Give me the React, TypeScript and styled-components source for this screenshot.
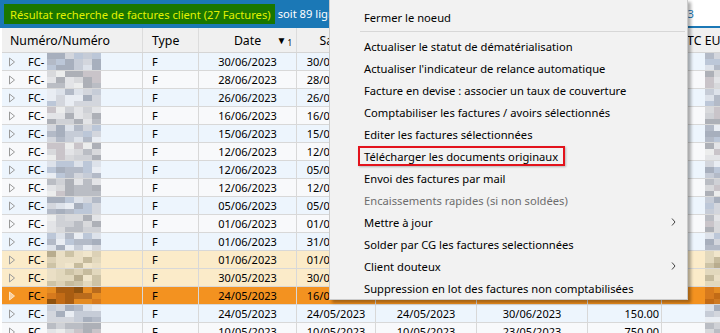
import React from 'react'
import styled, { createGlobalStyle } from 'styled-components'

type Variant = 'even' | 'odd' | 'warn' | 'selected'

type Row = {
  date: string
  saisie: string
  echeance: string
  reglement: string
  montant: string
  variant: Variant
}

const rows: Row[] = [
  { date: '30/06/2023', saisie: '30/06/2023', echeance: '30/06/2023', reglement: '30/07/2023', montant: '420.00', variant: 'even' },
  { date: '28/06/2023', saisie: '28/06/2023', echeance: '28/06/2023', reglement: '28/07/2023', montant: '1 250.00', variant: 'odd' },
  { date: '26/06/2023', saisie: '26/06/2023', echeance: '26/06/2023', reglement: '26/07/2023', montant: '96.00', variant: 'even' },
  { date: '16/06/2023', saisie: '16/06/2023', echeance: '16/06/2023', reglement: '16/07/2023', montant: '310.50', variant: 'odd' },
  { date: '15/06/2023', saisie: '15/06/2023', echeance: '15/06/2023', reglement: '15/07/2023', montant: '75.00', variant: 'even' },
  { date: '12/06/2023', saisie: '12/06/2023', echeance: '12/06/2023', reglement: '12/07/2023', montant: '640.00', variant: 'odd' },
  { date: '12/06/2023', saisie: '05/07/2023', echeance: '12/06/2023', reglement: '12/07/2023', montant: '180.00', variant: 'even' },
  { date: '12/06/2023', saisie: '12/06/2023', echeance: '12/06/2023', reglement: '12/07/2023', montant: '220.00', variant: 'odd' },
  { date: '05/06/2023', saisie: '05/06/2023', echeance: '05/06/2023', reglement: '05/07/2023', montant: '55.00', variant: 'even' },
  { date: '01/06/2023', saisie: '01/06/2023', echeance: '01/06/2023', reglement: '01/07/2023', montant: '900.00', variant: 'odd' },
  { date: '01/06/2023', saisie: '31/05/2023', echeance: '01/06/2023', reglement: '01/07/2023', montant: '130.00', variant: 'even' },
  { date: '01/06/2023', saisie: '01/06/2023', echeance: '01/06/2023', reglement: '01/07/2023', montant: '480.00', variant: 'warn' },
  { date: '30/05/2023', saisie: '30/05/2023', echeance: '30/05/2023', reglement: '30/06/2023', montant: '260.00', variant: 'warn' },
  { date: '24/05/2023', saisie: '16/06/2023', echeance: '24/05/2023', reglement: '30/06/2023', montant: '150.00', variant: 'selected' },
  { date: '24/05/2023', saisie: '24/05/2023', echeance: '24/05/2023', reglement: '30/06/2023', montant: '150.00', variant: 'even' },
  { date: '10/05/2023', saisie: '10/05/2023', echeance: '10/05/2023', reglement: '23/05/2023', montant: '750.00', variant: 'odd' },
]

const rowBg: Record<Variant, string> = {
  even: '#edf5fd',
  odd: '#f8f9fb',
  warn: '#fbebc9',
  selected: '#f39220',
}

const palettes: Record<Variant, string[]> = {
  even: ['#c6ccd7', '#b3bac7', '#dde2ea', '#a7afbd', '#e9edf3', '#bcc7d8', '#d3d6dd'],
  odd: ['#cfd1d6', '#babdc4', '#e3e4e7', '#adb0b7', '#eceded', '#c9c4c9', '#d8d9dc'],
  warn: ['#dcd1b6', '#c6bb9d', '#eadfc5', '#b8ac8e', '#f1e6cc', '#cdc3a6', '#e2d8bd'],
  selected: ['#d77a1d', '#c26b16', '#e48b22', '#a95d12', '#b96b1c', '#cf7a22', '#8f520f'],
}

const columns = '141px 56px 98px 79px 101px 111px 74px 120px'

const GlobalStyle = createGlobalStyle`
  html, body {
    margin: 0;
    padding: 0;
    background: #fff;
  }
  body {
    font-family: 'Noto Sans', 'Liberation Sans', sans-serif;
    overflow: hidden;
  }
`

const Screen = styled.div`
  position: relative;
  width: 720px;
  height: 333px;
  overflow: hidden;
  background: #fff;
`

const TitleBar = styled.div`
  display: flex;
  height: 26px;
  border-bottom: 2px solid #1b78b6;
  font-size: 11.2px;
  white-space: nowrap;
  overflow: hidden;
`

const Selection = styled.div`
  flex: 0 0 470px;
  display: flex;
  align-items: center;
  gap: 3px;
  padding-left: 4px;
  background: #1b78b6;
  color: #fff;
`

const Highlight = styled.span`
  display: flex;
  align-items: center;
  height: 20px;
  margin-top: 2px;
  padding: 0 4px 0 6px;
  background: #1a7700;
  color: #e2f200;
`

const Total = styled.div`
  margin-left: auto;
  padding-right: 26px;
  display: flex;
  align-items: center;
  color: #1b78b6;
`

const Grid = styled.div`
  padding-left: 2px;
`

const HeaderRow = styled.div`
  display: grid;
  grid-template-columns: ${columns};
  height: 24px;
  border-bottom: 1px solid #d5d5d5;
  background: #f0f0f0;
`

const HeaderCell = styled.div<{ $align?: 'left' | 'center' | 'right'; $pad?: number }>`
  display: flex;
  align-items: center;
  justify-content: ${(p) => (p.$align === 'center' ? 'center' : p.$align === 'right' ? 'flex-end' : 'flex-start')};
  padding-left: ${(p) => p.$pad ?? 0}px;
  border-right: 1px solid #dcdcdc;
  font-size: 12.3px;
  color: #000;
  white-space: nowrap;
  overflow: hidden;
`

const DateHeader = styled(HeaderCell)`
  position: relative;
`

const SortMark = styled.span`
  position: absolute;
  right: 4px;
  top: 6px;
  display: flex;
  align-items: flex-start;
  font-size: 10px;
  line-height: 12px;
  color: #000;
  sup {
    font-size: 8px;
    line-height: 8px;
    margin-left: 1px;
    margin-top: 5px;
  }
`

const DataRow = styled.div<{ $variant: Variant }>`
  display: grid;
  grid-template-columns: ${columns};
  height: 17px;
  border-bottom: 1px solid #d8d8d8;
  background: ${(p) => rowBg[p.$variant]};
`

const Cell = styled.div<{ $align?: 'left' | 'center' | 'right'; $pad?: number }>`
  display: flex;
  align-items: center;
  justify-content: ${(p) => (p.$align === 'center' ? 'center' : p.$align === 'right' ? 'flex-end' : 'flex-start')};
  padding-left: ${(p) => (p.$align === 'right' ? 0 : p.$pad ?? 0)}px;
  padding-right: ${(p) => (p.$align === 'right' ? p.$pad ?? 0 : 0)}px;
  border-right: 1px solid #d8d8d8;
  font-size: 11px;
  color: #000;
  white-space: nowrap;
  overflow: hidden;
`

const NumberCell = styled(Cell)`
  padding-left: 6px;
`

const Prefix = styled.span`
  margin-left: 12px;
  width: 19px;
`

const MosaicGrid = styled.div<{ $cols: number }>`
  display: grid;
  grid-template-columns: repeat(${(p) => p.$cols}, 9px);
  grid-template-rows: repeat(3, 6px);
  align-self: stretch;
`

const Menu = styled.div`
  position: absolute;
  left: 329px;
  top: -1px;
  width: 359px;
  box-sizing: border-box;
  padding: 6px 2px 0 2px;
  background: #f2f2f2;
  border: 1px solid #cbcbcb;
  box-shadow: 3px 3px 3px rgba(0, 0, 0, 0.32);
  font-size: 11.2px;
`

const MenuItem = styled.div<{ $disabled?: boolean }>`
  display: flex;
  align-items: center;
  height: 22px;
  padding: 0 9px 0 32px;
  color: ${(p) => (p.$disabled ? '#6d6d6d' : '#000')};
  white-space: nowrap;
`

const MenuSeparator = styled.div`
  height: 1px;
  margin: 3px 0 3px 28px;
  background: #d7d7d7;
`

const Marked = styled.span`
  margin-left: -6px;
  padding: 0 5px 0 4px;
  height: 16px;
  display: flex;
  align-items: center;
  border: 2px solid #e3131c;
  box-shadow: 1px 1px 2px rgba(0, 0, 0, 0.25);
`

const SubArrow = styled.svg`
  margin-left: auto;
`

const noise = (seed: number) => {
  const x = Math.sin(seed * 12.9898 + 78.233) * 43758.5453
  return x - Math.floor(x)
}

const Mosaic: React.FC<{ seed: number; variant: Variant; cols: number }> = ({ seed, variant, cols }) => {
  const palette = palettes[variant]
  const cells = []
  for (let r = 0; r < 3; r++) {
    for (let c = 0; c < cols; c++) {
      const pick = Math.floor(noise(seed * 31 + r * 7 + c * 3) * palette.length)
      cells.push(<span key={`${r}-${c}`} style={{ background: palette[pick] }} />)
    }
  }
  return <MosaicGrid $cols={cols}>{cells}</MosaicGrid>
}

const Expander: React.FC<{ selected: boolean }> = ({ selected }) => (
  <svg width={8} height={10} viewBox="0 0 8 10">
    <polygon
      points="1.5,1 6.5,5 1.5,9"
      fill={selected ? 'rgba(255,255,255,0.55)' : 'none'}
      stroke={selected ? '#fbe3c4' : '#9a9a9a'}
      strokeWidth={1}
    />
  </svg>
)

const Chevron = () => (
  <SubArrow width={5} height={8} viewBox="0 0 5 8">
    <polyline points="1,0.5 4,4 1,7.5" fill="none" stroke="#444" strokeWidth={1} />
  </SubArrow>
)

const menuEntries: { label: string; disabled?: boolean; sub?: boolean; marked?: boolean }[] = [
  { label: "Actualiser le statut de dématérialisation" },
  { label: "Actualiser l'indicateur de relance automatique" },
  { label: 'Facture en devise : associer un taux de couverture' },
  { label: 'Comptabiliser les factures / avoirs sélectionnés' },
  { label: 'Editer les factures sélectionnées' },
  { label: 'Télécharger les documents originaux', marked: true },
  { label: 'Envoi des factures par mail' },
  { label: 'Encaissements rapides (si non soldées)', disabled: true },
  { label: 'Mettre à jour', sub: true },
  { label: 'Solder par CG les factures selectionnées' },
  { label: 'Client douteux', sub: true },
  { label: 'Suppression en lot des factures non comptabilisées' },
]

const App: React.FC = () => {
  return (
    <>
      <GlobalStyle />
      <Screen>
        <TitleBar>
          <Selection>
            <Highlight>Résultat recherche de factures client (27 Factures)</Highlight>
            soit 89 lignes sélectionnées
          </Selection>
          <Total>Montant total TTC : 31 480,23</Total>
        </TitleBar>
        <Grid>
          <HeaderRow>
            <HeaderCell $pad={8}>Numéro/Numéro</HeaderCell>
            <HeaderCell $pad={9}>Type</HeaderCell>
            <DateHeader $align="center">
              Date
              <SortMark>
                ▼<sup>1</sup>
              </SortMark>
            </DateHeader>
            <HeaderCell $align="center">Saisie</HeaderCell>
            <HeaderCell $align="center">Echéance</HeaderCell>
            <HeaderCell $align="center">Règlement</HeaderCell>
            <HeaderCell $align="center">HT EUR</HeaderCell>
            <HeaderCell $pad={18}>TTC EUR</HeaderCell>
          </HeaderRow>
          {rows.map((row, i) => (
            <DataRow key={i} $variant={row.variant}>
              <NumberCell>
                <Expander selected={row.variant === 'selected'} />
                <Prefix>FC-</Prefix>
                <Mosaic seed={i + 1} variant={row.variant} cols={6} />
              </NumberCell>
              <Cell $pad={9}>F</Cell>
              <Cell $align="center">{row.date}</Cell>
              <Cell $align="center">{row.saisie}</Cell>
              <Cell $align="center">{row.echeance}</Cell>
              <Cell $align="center">{row.reglement}</Cell>
              <Cell $align="right" $pad={2}>
                {row.montant}
              </Cell>
              <Cell $pad={43}>
                <Mosaic seed={i + 50} variant={row.variant} cols={2} />
              </Cell>
            </DataRow>
          ))}
        </Grid>
        <Menu>
          <MenuItem>Fermer le noeud</MenuItem>
          <MenuSeparator />
          {menuEntries.map((entry) => (
            <MenuItem key={entry.label} $disabled={entry.disabled}>
              {entry.marked ? <Marked>{entry.label}</Marked> : entry.label}
              {entry.sub && <Chevron />}
            </MenuItem>
          ))}
        </Menu>
      </Screen>
    </>
  )
}

export default App
